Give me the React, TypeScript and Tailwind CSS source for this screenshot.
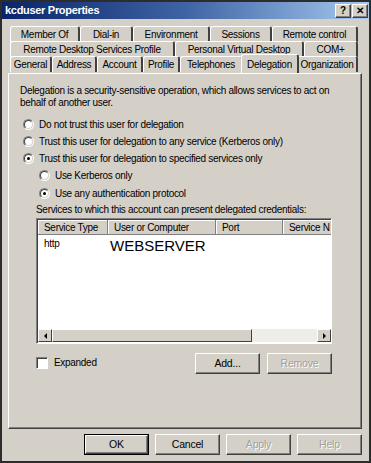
import type { ReactNode } from 'react';

const FONT = 'font-["Liberation_Sans",Arial,sans-serif]';

const ROWS: { label: string; w: number; active?: boolean }[][] = [
  [
    { label: 'Member Of', w: 70 },
    { label: 'Dial-in', w: 53 },
    { label: 'Environment', w: 77 },
    { label: 'Sessions', w: 62 },
    { label: 'Remote control', w: 86 },
  ],
  [
    { label: 'Remote Desktop Services Profile', w: 165 },
    { label: 'Personal Virtual Desktop', w: 129 },
    { label: 'COM+', w: 54 },
  ],
  [
    { label: 'General', w: 42 },
    { label: 'Address', w: 45 },
    { label: 'Account', w: 46 },
    { label: 'Profile', w: 37 },
    { label: 'Telephones', w: 63 },
    { label: 'Delegation', w: 54, active: true },
    { label: 'Organization', w: 61 },
  ],
];

function Tab({ label, w, active }: { label: string; w: number; active?: boolean }) {
  if (active) {
    return (
      <div
        className="relative z-10 -mx-[2px] -mt-[2px] -mb-[1px] flex h-[19px] items-start justify-center whitespace-nowrap rounded-t-[3px] border-l border-t border-r-2 border-l-white border-t-white border-r-[#404040] bg-[#d4d0c8] pt-[2px] text-[10px] tracking-[-0.3px] text-black"
        style={{ width: w + 4 }}
      >
        {label}
      </div>
    );
  }
  return (
    <div
      className="flex h-[16px] items-center justify-center whitespace-nowrap rounded-t-[3px] border-l border-t border-r-2 border-l-white border-t-white border-r-[#404040] text-[10px] tracking-[-0.3px] text-black"
      style={{ width: w }}
    >
      {label}
    </div>
  );
}

function Radio({ checked, children }: { checked?: boolean; children: ReactNode }) {
  return (
    <div className="flex h-[13px] items-center gap-[5px]">
      <span className="flex h-[11px] w-[11px] items-center justify-center rounded-full border border-b-white border-l-[#808080] border-r-white border-t-[#808080] bg-[#d4d0c8]">
        <span className="flex h-[9px] w-[9px] items-center justify-center rounded-full border border-b-[#d4d0c8] border-l-[#404040] border-r-[#d4d0c8] border-t-[#404040] bg-white">
          {checked && <span className="h-[3px] w-[3px] rounded-full bg-black" />}
        </span>
      </span>
      <span>{children}</span>
    </div>
  );
}

function Button({ children, def, disabled }: { children: ReactNode; def?: boolean; disabled?: boolean }) {
  return (
    <div className={`${def ? 'border border-black' : ''} flex`}>
      <div
        className={`flex ${def ? 'h-[19px] w-[63px]' : 'h-[21px] w-[65px]'} items-center justify-center border border-b-[#404040] border-l-white border-r-[#404040] border-t-white text-[10.5px] tracking-[-0.2px] shadow-[inset_-1px_-1px_0_#808080] ${
          disabled ? 'text-[#a0a0a0] [text-shadow:1px_1px_0_#fff]' : 'text-black'
        }`}
      >
        {children}
      </div>
    </div>
  );
}

export default function App() {
  return (
    <div className={`${FONT} h-[463px] w-[371px] border-2 border-[#2c2c2c] bg-[#d4d0c8] text-black`}>
      {/* title bar */}
      <div className="flex h-[17px] items-center justify-between bg-gradient-to-r from-[#0a246a] via-[#3f64a3] to-[#a6caf0] pl-[3px] pr-[1px]">
        <span className="text-[11px] font-bold tracking-[-0.3px] text-white">kcduser Properties</span>
        <div className="flex gap-[1px]">
          {['?', '✕'].map((g) => (
            <span
              key={g}
              className="flex h-[14px] w-[16px] items-center justify-center border border-b-[#404040] border-l-white border-r-[#404040] border-t-white bg-[#d4d0c8] text-[10px] font-bold leading-none shadow-[inset_-1px_-1px_0_#808080]"
            >
              {g}
            </span>
          ))}
        </div>
      </div>

      <div className="px-[6px] pt-[8px]">
        {/* tabs */}
        <div className="ml-[2px] flex flex-col">
          {ROWS.map((row, i) => (
            <div key={i} className="flex h-[15px] items-end">
              {row.map((t) => (
                <Tab key={t.label} {...t} />
              ))}
            </div>
          ))}
        </div>

        {/* panel */}
        <div className="mt-[1px] h-[356px] w-[354px] border border-b-[#404040] border-l-white border-r-[#404040] border-t-white pl-[11px] pt-[11px] text-[10px] tracking-[-0.3px] shadow-[inset_-1px_-1px_0_#808080]">
          <p className="w-[325px] leading-[12px]">
            Delegation is a security-sensitive operation, which allows services to act on behalf of another user.
          </p>
          <div className="mt-[9px] flex flex-col gap-[4px] pl-[3px]">
            <Radio>Do not trust this user for delegation</Radio>
            <Radio>Trust this user for delegation to any service (Kerberos only)</Radio>
            <Radio checked>Trust this user for delegation to specified services only</Radio>
            <div className="flex flex-col gap-[5px] pl-[16px]">
              <Radio>Use Kerberos only</Radio>
              <Radio checked>Use any authentication protocol</Radio>
            </div>
          </div>

          <div className="mt-[3px] pl-[16px]">
            <p className="leading-[13px]">Services to which this account can present delegated credentials:</p>
            <div className="mt-[2px] flex h-[126px] w-[296px] flex-col border border-b-white border-l-[#808080] border-r-white border-t-[#808080] bg-white shadow-[inset_1px_1px_0_#404040]">
              <div className="ml-[1px] mt-[1px] flex h-[15px] overflow-hidden bg-[#d4d0c8]">
                {[
                  ['Service Type', 70],
                  ['User or Computer', 108],
                  ['Port', 67],
                  ['Service N', 60],
                ].map(([l, w]) => (
                  <div
                    key={l as string}
                    className="flex shrink-0 items-center whitespace-nowrap border-r border-b border-r-[#808080] border-b-[#808080] pl-[6px] shadow-[inset_1px_1px_0_#fff]"
                    style={{ width: w as number }}
                  >
                    {l}
                  </div>
                ))}
              </div>
              <div className="flex flex-1 items-start pl-[7px] pt-[2px]">
                <span className="w-[66px] leading-[13px]">http</span>
                <span className="pt-[1px] text-[15px] leading-[16px] tracking-normal">WEBSERVER</span>
              </div>
              <div className="ml-[1px] mb-[1px] flex h-[13px]">
                <span className="flex w-[14px] items-center justify-center border border-b-[#404040] border-l-white border-r-[#404040] border-t-white bg-[#d4d0c8]">
                  <span className="h-0 w-0 border-y-[3px] border-r-[3px] border-y-transparent border-r-black" />
                </span>
                <span className="w-[200px] border border-b-[#404040] border-l-white border-r-[#404040] border-t-white bg-[#d4d0c8]" />
                <span className="flex-1 bg-[#eeede9]" />
                <span className="flex w-[14px] items-center justify-center border border-b-[#404040] border-l-white border-r-[#404040] border-t-white bg-[#d4d0c8]">
                  <span className="h-0 w-0 border-y-[3px] border-l-[3px] border-y-transparent border-l-black" />
                </span>
              </div>
            </div>

            <div className="mt-[9px] flex w-[296px] items-start justify-between">
              <div className="mt-[2px] flex items-center gap-[6px]">
                <span className="h-[12px] w-[12px] border border-b-white border-l-[#808080] border-r-white border-t-[#808080] bg-white shadow-[inset_1px_1px_0_#404040]" />
                <span>Expanded</span>
              </div>
              <div className="flex gap-[7px]">
                <Button>Add...</Button>
                <Button disabled>Remove</Button>
              </div>
            </div>
          </div>
        </div>

        {/* dialog buttons */}
        <div className="mt-[5px] flex justify-end gap-[6px] pr-[1px]">
          <Button def>OK</Button>
          <Button>Cancel</Button>
          <Button disabled>Apply</Button>
          <Button disabled>Help</Button>
        </div>
      </div>
    </div>
  );
}
